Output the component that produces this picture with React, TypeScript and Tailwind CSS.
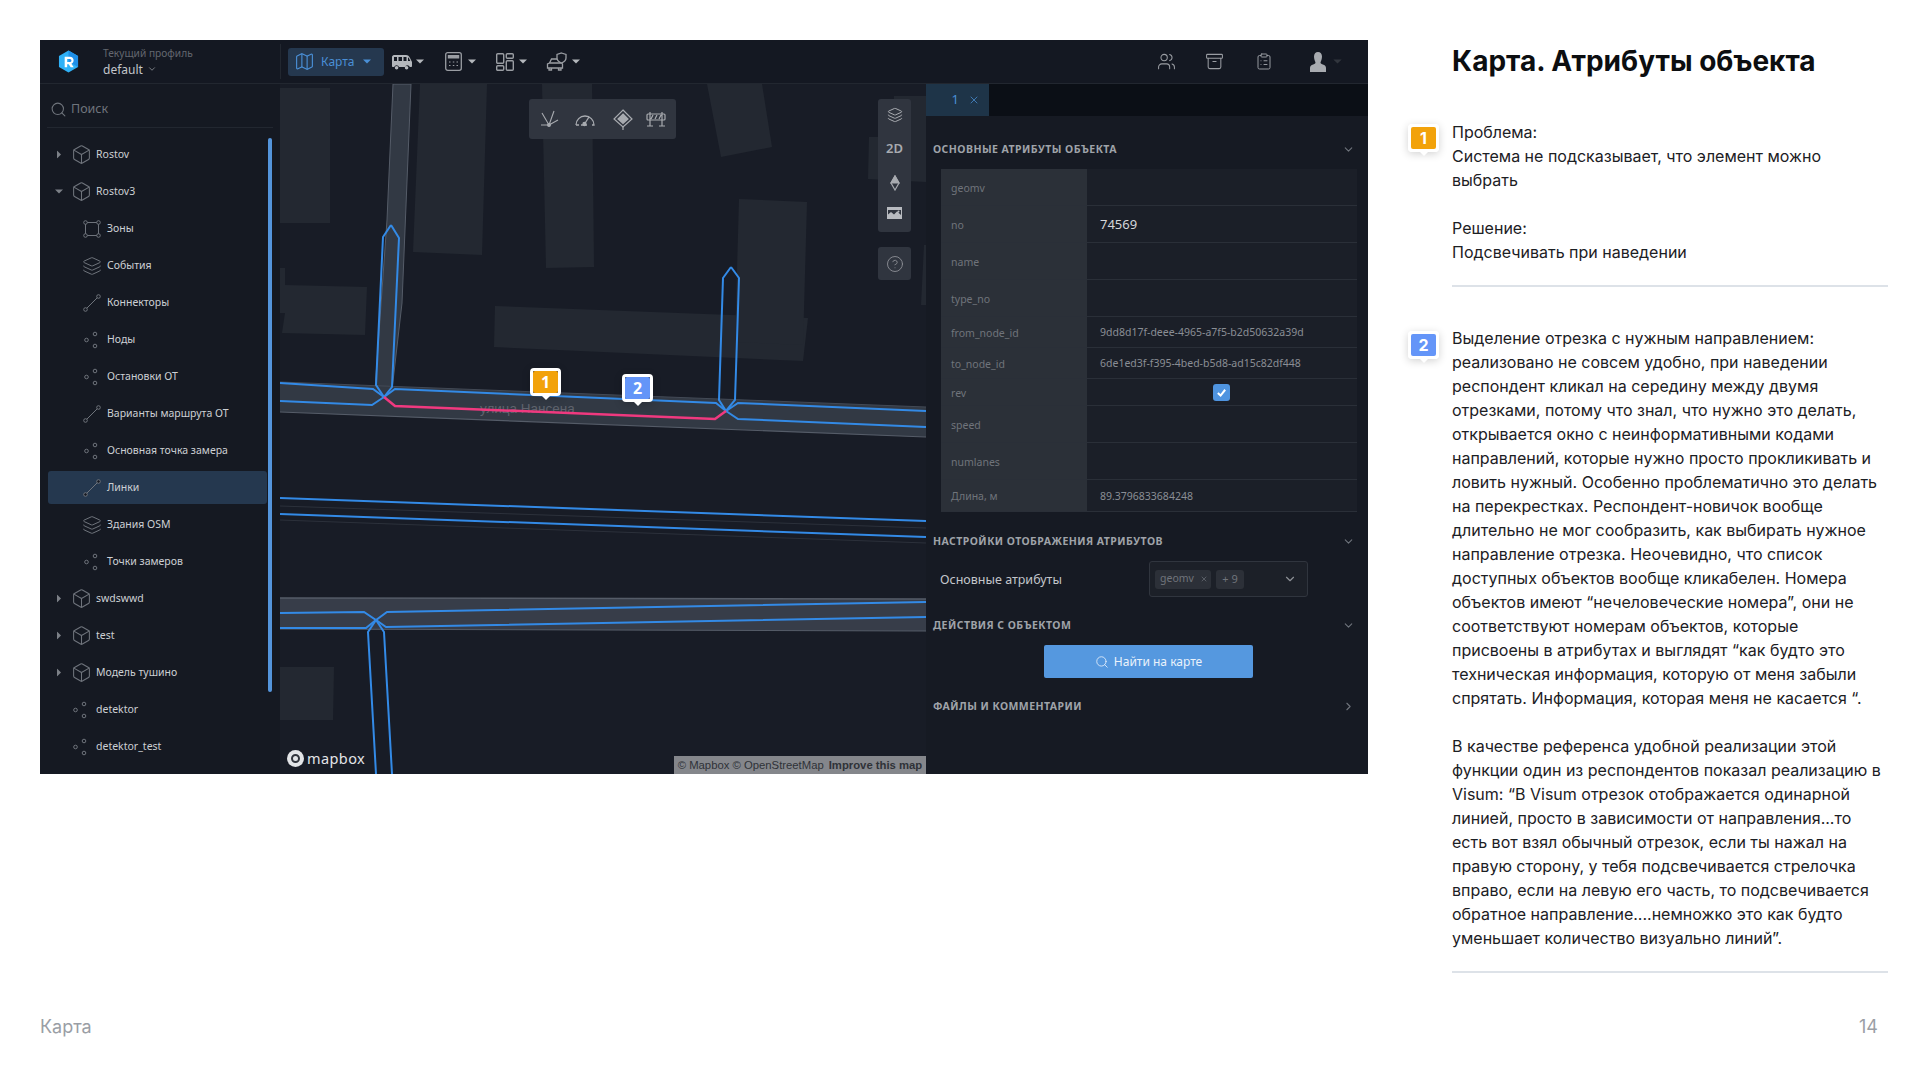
import React from 'react';
import {
  Archive,
  Box,
  ChevronDown,
  ChevronRight,
  CircleHelp,
  ClipboardList,
  Layers,
  Map as MapIcon,
  Search,
  Users,
  X,
} from 'lucide-react';

type RowKind = 'cube' | 'zone' | 'layers' | 'link' | 'nodes';

interface TreeRow {
  label: string;
  kind: RowKind;
  level: 0 | 1;
  caret?: 'right' | 'down';
  active?: boolean;
}

const treeRows: TreeRow[] = [
  { label: 'Rostov', kind: 'cube', level: 0, caret: 'right' },
  { label: 'Rostov3', kind: 'cube', level: 0, caret: 'down' },
  { label: 'Зоны', kind: 'zone', level: 1 },
  { label: 'События', kind: 'layers', level: 1 },
  { label: 'Коннекторы', kind: 'link', level: 1 },
  { label: 'Ноды', kind: 'nodes', level: 1 },
  { label: 'Остановки ОТ', kind: 'nodes', level: 1 },
  { label: 'Варианты маршрута ОТ', kind: 'link', level: 1 },
  { label: 'Основная точка замера', kind: 'nodes', level: 1 },
  { label: 'Линки', kind: 'link', level: 1, active: true },
  { label: 'Здания OSM', kind: 'layers', level: 1 },
  { label: 'Точки замеров', kind: 'nodes', level: 1 },
  { label: 'swdswwd', kind: 'cube', level: 0, caret: 'right' },
  { label: 'test', kind: 'cube', level: 0, caret: 'right' },
  { label: 'Модель тушино', kind: 'cube', level: 0, caret: 'right' },
  { label: 'detektor', kind: 'nodes', level: 0 },
  { label: 'detektor_test', kind: 'nodes', level: 0 },
];

const attrRows = [
  { name: 'geomv', value: '', h: 'h-[37px]' },
  { name: 'no', value: '74569', h: 'h-[37px]', bright: true },
  { name: 'name', value: '', h: 'h-[37px]' },
  { name: 'type_no', value: '', h: 'h-[37px]' },
  { name: 'from_node_id', value: '9dd8d17f-deee-4965-a7f5-b2d50632a39d', h: 'h-[31px]' },
  { name: 'to_node_id', value: '6de1ed3f-f395-4bed-b5d8-ad15c82df448', h: 'h-[31px]' },
  { name: 'rev', value: 'check', h: 'h-[27px]' },
  { name: 'speed', value: '', h: 'h-[37px]' },
  { name: 'numlanes', value: '', h: 'h-[37px]' },
  { name: 'Длина, м', value: '89.3796833684248', h: 'h-[32px]' },
];

const problemLines = [
  'Проблема:',
  'Система не подсказывает, что элемент можно',
  'выбрать',
  '',
  'Решение:',
  'Подсвечивать при наведении',
];

const detailLines = [
  'Выделение отрезка с нужным направлением:',
  'реализовано не совсем удобно, при наведении',
  'респондент кликал на середину между двумя',
  'отрезками, потому что знал, что нужно это делать,',
  'открывается окно с неинформативными кодами',
  'направлений, которые нужно просто прокликивать и',
  'ловить нужный. Особенно проблематично это делать',
  'на перекрестках. Респондент-новичок вообще',
  'длительно не мог сообразить, как выбирать нужное',
  'направление отрезка. Неочевидно, что список',
  'доступных объектов вообще кликабелен. Номера',
  'объектов имеют “нечеловеческие номера”, они не',
  'соответствуют номерам объектов, которые',
  'присвоены в атрибутах и выглядят “как будто это',
  'техническая информация, которую от меня забыли',
  'спрятать. Информация, которая меня не касается “.',
  '',
  'В качестве референса удобной реализации этой',
  'функции один из респондентов показал реализацию в',
  'Visum: “В Visum отрезок отображается одинарной',
  'линией, просто в зависимости от направления...то',
  'есть вот взял обычный отрезок, если ты нажал на',
  'правую сторону, у тебя подсвечивается стрелочка',
  'вправо, если на левую его часть, то подсвечивается',
  'обратное направление....немножко это как будто',
  'уменьшает количество визуально линий”.',
];

const buildings = [
  '280,88 330,88 330,223 280,223',
  '420,84 487,84 482,255 413,252',
  '280,268 285,268 285,285 367,287 365,335 282,333 285,313 280,313',
  '495,306 808,318 803,361 494,347',
  '542,84 592,84 594,267 546,268',
  '707,84 762,84 772,147 721,157',
  '739,199 807,202 803,345 735,342',
  '894,96 926,96 926,182 868,179 869,137 894,137',
  '924,245 926,245 926,305 921,305',
  '280,667 334,667 333,720 280,720',
];

const TreeIcon = ({ kind }: { kind: RowKind }) => {
  if (kind === 'cube') {
    return <Box className="h-[21px] w-[21px] shrink-0 text-[#6f747c]" strokeWidth={1.2} />;
  }
  if (kind === 'layers') {
    return <Layers className="h-[20px] w-[20px] shrink-0 text-[#6f747c]" strokeWidth={1.2} />;
  }
  if (kind === 'zone') {
    return (
      <svg viewBox="0 0 18 18" className="h-[18px] w-[18px] shrink-0 text-[#6f747c]" fill="none" stroke="currentColor">
        <rect x="2.5" y="2.5" width="13" height="13" />
        <circle cx="2.5" cy="2.5" r="1.800" fill="#151922" />
        <circle cx="15.5" cy="2.5" r="1.800" fill="#151922" />
        <circle cx="2.5" cy="15.5" r="1.800" fill="#151922" />
        <circle cx="15.5" cy="15.5" r="1.800" fill="#151922" />
      </svg>
    );
  }
  if (kind === 'link') {
    return (
      <svg viewBox="0 0 18 18" className="h-[18px] w-[18px] shrink-0 text-[#6f747c]" fill="none" stroke="currentColor">
        <line x1="3" y1="15" x2="15" y2="3" />
        <circle cx="2.5" cy="15.5" r="1.800" fill="#151922" />
        <circle cx="15.5" cy="2.5" r="1.800" fill="#151922" />
      </svg>
    );
  }
  return (
    <svg viewBox="0 0 18 18" className="h-[18px] w-[18px] shrink-0 text-[#6f747c]" fill="none" stroke="currentColor">
      <circle cx="3.5" cy="9" r="1.800" />
      <circle cx="12" cy="3" r="1.800" />
      <circle cx="12" cy="15" r="1.800" />
    </svg>
  );
};

const Caret = ({ className }: { className: string }) => (
  <svg viewBox="0 0 10 6" className={className} fill="currentColor">
    <path d="M0 0.5h10L5 5.5z" />
  </svg>
);

const Logo = () => (
  <svg viewBox="0 0 22 24" className="h-[23px] w-[21px]">
    <path d="M11 0.5 21 6.2v11.6L11 23.5 1 17.8V6.2z" fill="#2fb1f7" />
    <path d="M11 0.5 21 6.2v11.6L11 12z" fill="#1f8fe8" />
    <path d="M7 7h5.500a3.800 3.800 0 0 1 1.500 7.300L16.500 18h-3.200l-2.100-3.200H9.600V18H7zM9.600 9.300v3.200h2.900a1.600 1.600 0 0 0 0-3.200z" fill="#ffffff" />
  </svg>
);

const VanIcon = () => (
  <svg viewBox="0 0 20 16" className="h-4 w-5 text-[#b4b7bc]">
    <path
      fill="currentColor"
      d="M2 1h12c2 0 3 1 4 3l2 4v4c0 .6-.4 1-1 1h-1.200a2.500 2.500 0 0 0-4.800 0H7a2.500 2.500 0 0 0-4.800 0H1c-.6 0-1-.4-1-1V3c0-1 1-2 2-2zm0 2v4h3V3zm4.500 0v4h3.500V3zm5 0v4h3V3zm4.500.4V7h2.300l-1.300-2.800c-.2-.4-.5-.7-1-.8zM4.600 12a1.800 1.800 0 1 1 0 3.600 1.800 1.800 0 0 1 0-3.600zm10 0a1.800 1.800 0 1 1 0 3.600 1.800 1.800 0 0 1 0-3.600z"
    />
  </svg>
);

const CalcIcon = () => (
  <svg viewBox="0 0 17 19" className="h-[19px] w-[17px] text-[#9a9da3]" fill="none" stroke="currentColor" strokeWidth="1.300">
    <rect x="0.700" y="0.700" width="15.600" height="17.600" rx="2" />
    <rect x="2.800" y="3" width="11.400" height="3.500" fill="currentColor" stroke="none" />
    <path d="M4 10h1.500M7.800 10h1.500M11.500 10H13M4 13.500h1.500M7.800 13.500h1.500M11.500 13.500H13" strokeWidth="1.200" />
  </svg>
);

const TilesIcon = () => (
  <svg viewBox="0 0 18 18" className="h-[18px] w-[18px] text-[#9a9da3]" fill="none" stroke="currentColor" strokeWidth="1.400">
    <rect x="0.700" y="0.700" width="7" height="9.500" rx="1" />
    <rect x="10.300" y="0.700" width="7" height="4.500" rx="1" />
    <rect x="10.300" y="7.800" width="7" height="9.500" rx="1" />
    <rect x="0.700" y="12.800" width="7" height="4.500" rx="1" />
  </svg>
);

const CarShieldIcon = () => (
  <svg viewBox="0 0 21 19" className="h-[19px] w-[21px] text-[#9a9da3]" fill="none" stroke="currentColor" strokeWidth="1.300">
    <path d="M11 7H5.500L3.500 11 1.500 12v4h15v-4l-1-1" />
    <path d="M3.500 11h12M3 16v2h2.500v-2M12.500 16v2H15v-2" />
    <path d="M15.500 1 20 2.500v3.500c0 2.500-2 4-4.500 5-2.500-1-4.500-2.500-4.500-5V2.500z" />
  </svg>
);

const ToolFanIcon = () => (
  <svg viewBox="0 0 20 18" className="h-[18px] w-5 text-[#a8abb0]" fill="none" stroke="currentColor" strokeWidth="1.100">
    <path d="M9 15 2 3M9 15l5-14M9 15l9-5M9 15H1" />
    <circle cx="9" cy="15" r="1.400" fill="currentColor" />
  </svg>
);

const ToolGaugeIcon = () => (
  <svg viewBox="0 0 20 16" className="h-4 w-5 text-[#a8abb0]" fill="none" stroke="currentColor" strokeWidth="1.300">
    <path d="M1 14a9 9 0 0 1 18 0h-2M1 14h3M6 14h6" />
    <path d="M9.500 13 14 6" />
    <circle cx="9.500" cy="13" r="1.500" fill="currentColor" />
  </svg>
);

const ToolDiamondIcon = () => (
  <svg viewBox="0 0 20 21" className="h-[21px] w-5 text-[#a8abb0]" fill="none" stroke="currentColor" strokeWidth="1.200">
    <path d="M10 1 19 10 10 18 1 10z" />
    <path d="M10 5 15 10 10 14.500 5 10z" fill="currentColor" />
    <path d="M10 18v3" />
  </svg>
);

const ToolBarrierIcon = () => (
  <svg viewBox="0 0 20 16" className="h-4 w-5 text-[#a8abb0]" fill="none" stroke="currentColor" strokeWidth="1.200">
    <rect x="1" y="3" width="18" height="6" rx="1" />
    <path d="M5 8 7 4M9 8l2-4M13 8l2-4M4 1v14M16 1v14M1 15h6M13 15h6" />
  </svg>
);

const CompassIcon = () => (
  <svg viewBox="0 0 10 16" className="h-4 w-[10px] text-[#a8abb0]" fill="none" stroke="currentColor" strokeWidth="1.200">
    <path d="M5 1 9 8 5 15 1 8z" />
    <path d="M5 1 9 8H1z" fill="currentColor" />
  </svg>
);

const PictureIcon = () => (
  <svg viewBox="0 0 15 12" className="h-3 w-[15px] text-[#b8bbc0]" fill="currentColor">
    <path d="M0 0h15v12H0zm1 3v4.500l3-2.500 3 2.500 3-3 4 3.500V3zm10.500.500a1 1 0 1 1 0 2 1 1 0 0 1 0-2z" fillRule="evenodd" />
  </svg>
);

const Marker = ({ value, tone }: { value: string; tone: 'orange' | 'blue' }) => (
  <div className="relative h-7 w-[31px] rounded-[4px] border-[3px] border-white shadow-[0_2px_8px_rgba(0,0,0,0.18)]">
    <div
      className={`flex h-full w-full items-center justify-center rounded-[2px] text-[16px] leading-none font-bold text-white ${
        tone === 'orange' ? 'bg-[#f2a20a]' : 'bg-[#6495f8]'
      }`}
    >
      {value}
    </div>
    <div className="absolute -bottom-[7px] left-1/2 h-0 w-0 -translate-x-1/2 border-x-[5px] border-t-[5px] border-x-transparent border-t-white" />
  </div>
);

const SectionTitle = ({ title, open = true, className }: { title: string; open?: boolean; className: string }) => (
  <div className={`flex h-10 items-center justify-between pr-[13px] pl-[7px] ${className}`}>
    <span className="pt-[2px] text-[10.5px] font-bold tracking-[0.45px] text-[#9fa3a9]">{title}</span>
    {open ? (
      <ChevronDown className="h-[13px] w-[13px] text-[#6f747c]" />
    ) : (
      <ChevronRight className="h-[13px] w-[13px] text-[#6f747c]" />
    )}
  </div>
);

const Sidebar = () => (
  <aside className="relative w-[240px] shrink-0 bg-[#151922]">
    <div className="mx-[7px] flex h-11 items-center gap-[4px] border-b border-[#222730] pt-2 pl-[3px] text-[#6f747c]">
      <Search className="h-[17px] w-[17px]" strokeWidth={1.5} />
      <span className="text-[12.5px]">Поиск</span>
    </div>
    <div className="pt-2">
      {treeRows.map((row) => (
        <div
          key={row.label}
          className={`flex h-[37px] items-center ${row.level === 1 ? 'pl-[43px]' : row.caret ? 'pl-[15px]' : 'pl-[32px]'}`}
        >
          {row.active && <div className="absolute left-[8px] h-[33px] w-[219px] rounded-[3px] bg-[#25384f]" />}
          {row.caret && (
            <span className="flex w-[17px] items-center text-[#7c8087]">
              <Caret className={row.caret === 'right' ? 'h-[5px] w-2 -rotate-90' : 'h-[5px] w-2'} />
            </span>
          )}
          <span className="relative flex items-center gap-[5px]">
            <span className="flex w-[18px] justify-center">
              <TreeIcon kind={row.kind} />
            </span>
            <span className="pl-[1px] text-[10.5px] whitespace-nowrap text-[#cdd0d4]">{row.label}</span>
          </span>
        </div>
      ))}
    </div>
    <div className="absolute top-[54px] left-[228px] h-[554px] w-1 rounded-full bg-[#5495dc]" />
  </aside>
);

const RoadMap = () => (
  <div className="relative w-[646px] shrink-0 overflow-hidden bg-[#181c26]">
    <svg viewBox="280 84 646 690" className="block h-[690px] w-[646px]" fill="none">
      {buildings.map((points) => (
        <polygon key={points} points={points} fill="#232831" />
      ))}
      <polygon points="393,84 411,84 402,303 392,390 375,390 387,220" fill="#323944" stroke="#555c68" />
      <polygon points="280,382 926,407 926,437 280,412" fill="#323944" />
      <polyline points="280,412 926,437" stroke="#555c68" strokeWidth="1.200" />
      <polyline points="280,382 926,407" stroke="#434a56" />
      <polygon points="280,598 926,599 926,631 280,629" fill="#373d49" />
      <polyline points="280,598 926,599" stroke="#555c68" strokeWidth="1.500" />
      <polyline points="280,629 926,631" stroke="#555c68" />
      <polyline points="280,506 926,528" stroke="#2c313b" />
      <polyline points="280,520 926,543" stroke="#2c313b" />
      <text x="480" y="413" fill="#5f636d" fontSize="13.500" fontFamily="Liberation Sans, sans-serif">улица Нансена</text>
      <g stroke="#338ae6" strokeWidth="2">
        <polyline points="391,225 383,237 376,385 384,397 392,387 399,238 391,225" />
        <polyline points="731,267 723,278 719,400 726,411 735,400 739,278 731,267" />
        <polyline points="280,383 373,389 384,397 395,389 716,403 726,411 738,403 926,411" />
        <polyline points="280,401 372,405 384,397" />
        <polyline points="726,411 738,419 926,427" />
        <polyline points="280,498 926,521" />
        <polyline points="280,514 926,537" />
        <polyline points="280,613 364,612 376,620 387,612 926,602" />
        <polyline points="280,628 366,628 376,620 386,627 926,617" />
        <polyline points="376,620 368,632 376,774" />
        <polyline points="376,620 384,632 392,774" />
      </g>
      <polyline points="384,397 395,406 715,419 726,411" stroke="#f0397f" strokeWidth="2.500" />
    </svg>

    {/* map toolbars */}
    <div className="absolute top-[15px] left-[249px] flex h-10 w-[147px] items-center justify-between rounded-[3px] bg-[#30353f] pr-[10px] pl-[11px]">
      <ToolFanIcon />
      <span className="pl-[2px]">
        <ToolGaugeIcon />
      </span>
      <span className="pl-[4px]">
        <ToolDiamondIcon />
      </span>
      <ToolBarrierIcon />
    </div>
    <div className="absolute top-[15px] left-[598px] flex h-[133px] w-[33px] flex-col items-center justify-around rounded-[3px] bg-[#30353f] pb-[5px]">
      <Layers className="h-[16px] w-[16px] text-[#a8abb0]" strokeWidth={1.5} />
      <span className="text-[13px] font-semibold text-[#a8abb0]">2D</span>
      <CompassIcon />
      <PictureIcon />
    </div>
    <div className="absolute top-[163px] left-[598px] flex h-[33px] w-[33px] items-center justify-center rounded-[3px] bg-[#30353f]">
      <CircleHelp className="h-[18px] w-[18px] text-[#8d9096]" strokeWidth={1.2} />
    </div>

    {/* callouts on the map */}
    <div className="absolute top-[284px] left-[250px]">
      <Marker value="1" tone="orange" />
    </div>
    <div className="absolute top-[290px] left-[342px]">
      <Marker value="2" tone="blue" />
    </div>

    <div className="absolute top-[666px] left-[7px] flex items-center gap-[3px] text-[#e3e5e8]">
      <span className="flex h-[17px] w-[17px] items-center justify-center rounded-full bg-[#e3e5e8]">
        <span className="h-[9px] w-[9px] rounded-full border-[2px] border-[#31353d] bg-[#e3e5e8]" />
      </span>
      <span className="font-['Noto_Sans'] text-[14.5px] leading-none tracking-[0.4px]">mapbox</span>
    </div>
    <div className="absolute right-0 bottom-0 flex h-[18px] w-[252px] items-center justify-center gap-[5px] bg-[#84868b] font-['Liberation_Sans'] text-[11.3px] whitespace-nowrap text-[#2f3238]">
      <span>© Mapbox © OpenStreetMap</span>
      <span className="font-bold">Improve this map</span>
    </div>
  </div>
);

const AttributesPanel = () => (
  <section className="w-[442px] shrink-0 bg-[#161a23]">
    <div className="flex h-8 bg-[#0b0f16]">
      <div className="flex w-[63px] items-center justify-end gap-[9px] bg-[#1e3448] pr-[9px] text-[#4a8fd6]">
        <span className="text-[13px]">1</span>
        <X className="h-3 w-3" strokeWidth={1.5} />
      </div>
    </div>
    <SectionTitle title="ОСНОВНЫЕ АТРИБУТЫ ОБЪЕКТА" className="mt-[13px]" />
    <div className="ml-[15px] w-[416px]">
      {attrRows.map((row) => (
        <div key={row.name} className={`flex border-b border-[#2a2f38] ${row.h}`}>
          <div className="flex w-[146px] items-center bg-[#2b3038] pt-[3px] pl-[10px] text-[10.5px] text-[#70747b]">{row.name}</div>
          <div className="flex flex-1 items-center bg-[#1b1f28] pl-[13px]">
            {row.value === 'check' ? (
              <span className="ml-[113px] flex h-[17px] w-[17px] items-center justify-center rounded-[3px] bg-[#4f94e0]">
                <svg viewBox="0 0 12 12" className="h-[11px] w-[11px]" fill="none" stroke="#ffffff" strokeWidth="2.200">
                  <path d="M2 6.500 5 9.300 10 3" />
                </svg>
              </span>
            ) : row.bright ? (
              <span className="pt-[2px] text-[13px] text-[#d4d6da]">{row.value}</span>
            ) : (
              <span className="pt-[2px] text-[10.5px] text-[#8a8e95]">{row.value}</span>
            )}
          </div>
        </div>
      ))}
    </div>
    <SectionTitle title="НАСТРОЙКИ ОТОБРАЖЕНИЯ АТРИБУТОВ" className="mt-[9px]" />
    <div className="flex h-9 items-center pl-[14px]">
      <span className="w-[209px] pt-[2px] text-[12.5px] text-[#c3c6cb]">Основные атрибуты</span>
      <div className="flex h-9 w-[159px] items-center rounded-[3px] border border-[#30353e] bg-[#1c2028] pr-[10px] pl-[5px]">
        <span className="flex h-[19px] w-[56px] items-center gap-[6px] rounded-[3px] bg-[#2c3038] pl-[5px] text-[10.5px] text-[#70747b]">
          geomv
          <X className="h-2 w-2" />
        </span>
        <span className="ml-[5px] flex h-[19px] w-[28px] items-center justify-center rounded-[3px] bg-[#2c3038] text-[11px] text-[#70747b]">
          + 9
        </span>
        <ChevronDown className="ml-auto h-[14px] w-[14px] text-[#8d9096]" />
      </div>
    </div>
    <SectionTitle title="ДЕЙСТВИЯ С ОБЪЕКТОМ" className="mt-2" />
    <div className="ml-[118px] flex h-[33px] w-[209px] items-center justify-center gap-[5px] rounded-[2px] bg-[#5598df] text-[12px] text-[#eaf2fb]">
      <Search className="h-[14px] w-[14px]" strokeWidth={1.4} />
      Найти на карте
    </div>
    <SectionTitle title="ФАЙЛЫ И КОММЕНТАРИИ" open={false} className="mt-2" />
  </section>
);

const TopBar = () => (
  <header className="flex h-11 items-center border-b border-[#222730] bg-[#141822]">
    <div className="flex w-[240px] shrink-0 items-center pl-[18px]">
      <Logo />
      <div className="ml-[24px] flex flex-col pt-[1px]">
        <span className="text-[10.2px] leading-[13px] text-[#63676f]">Текущий профиль</span>
        <span className="flex items-center gap-[4px] pt-[1px] text-[12px] leading-[17px] text-[#c3c6cb]">
          default
          <ChevronDown className="h-[10px] w-[10px] text-[#8d9096]" />
        </span>
      </div>
    </div>
    <div className="h-[35px] w-px bg-[#222730]" />
    <div className="ml-[7px] flex h-[28px] w-[96px] items-center gap-[6px] rounded-[3px] bg-[#25384f] pl-[6px] text-[#4a8fd6]">
      <MapIcon className="h-[21px] w-[21px]" strokeWidth={1.3} />
      <span className="text-[12px]">Карта</span>
      <Caret className="ml-[3px] h-[5px] w-2" />
    </div>
    <div className="ml-2 flex items-center gap-[4px] text-[#b4b7bc]">
      <VanIcon />
      <Caret className="h-[5px] w-2" />
    </div>
    <div className="ml-[21px] flex items-center gap-[6px] text-[#b4b7bc]">
      <CalcIcon />
      <Caret className="h-[5px] w-2" />
    </div>
    <div className="ml-[20px] flex items-center gap-[5px] text-[#b4b7bc]">
      <TilesIcon />
      <Caret className="h-[5px] w-2" />
    </div>
    <div className="ml-[19px] flex items-center gap-[5px] text-[#b4b7bc]">
      <CarShieldIcon />
      <Caret className="h-[5px] w-2" />
    </div>
    <div className="ml-auto flex items-center pr-[26px] text-[#9a9da3]">
      <Users className="h-[19px] w-[19px]" strokeWidth={1.3} />
      <Archive className="ml-[29px] h-[19px] w-[19px]" strokeWidth={1.3} />
      <ClipboardList className="ml-[31px] h-[19px] w-[18px]" strokeWidth={1.3} />
      <svg viewBox="0 0 16 20" className="ml-[37px] h-5 w-4 text-[#a8abb0]" fill="currentColor">
        <path d="M8 0c2.500 0 4 2 4 4.500S11 9 10.500 10.500c0 1 1 1.500 3 2.300 1.700.7 2.500 1.700 2.500 3.200V20H0v-4c0-1.500.8-2.500 2.500-3.200 2-.8 3-1.300 3-2.300C5 9 4 7 4 4.500S5.500 0 8 0z" />
      </svg>
      <Caret className="ml-[7px] h-[5px] w-[9px] text-[#31353d]" />
    </div>
  </header>
);

const TextLines = ({ lines }: { lines: string[] }) => (
  <div className="text-[16px] leading-6 text-[#1c2024]">
    {lines.map((line, index) => (
      <div key={index} className="h-6 whitespace-nowrap">
        {line}
      </div>
    ))}
  </div>
);

export default function App() {
  return (
    <div className="flex h-[1080px] w-[1920px] overflow-hidden bg-white font-['Inter',sans-serif]">
      <main className="w-[1404px] shrink-0 pt-10 pl-10">
        <div className="flex h-[734px] w-[1328px] flex-col font-['Noto_Sans',sans-serif]">
          <TopBar />
          <div className="flex h-[690px]">
            <Sidebar />
            <RoadMap />
            <AttributesPanel />
          </div>
        </div>
        <div className="mt-[241px] text-[18px] leading-6 text-[#9a9ea5]">Карта</div>
      </main>

      <aside className="flex-1 pt-[43px]">
        <h1 className="pl-12 text-[28px] leading-9 font-bold text-[#0c0e10]">Карта. Атрибуты объекта</h1>
        <div className="mt-[41px] flex">
          <div className="w-12 pt-1 pl-[4px]">
            <Marker value="1" tone="orange" />
          </div>
          <TextLines lines={problemLines} />
        </div>
        <div className="mt-[21px] ml-12 h-[2px] w-[436px] bg-[#dde2e8]" />
        <div className="mt-[39px] flex">
          <div className="w-12 pt-[5px] pl-[4px]">
            <Marker value="2" tone="blue" />
          </div>
          <TextLines lines={detailLines} />
        </div>
        <div className="mt-[21px] ml-12 h-[2px] w-[436px] bg-[#dde2e8]" />
        <div className="mt-[42px] w-[474px] text-right text-[18px] leading-6 text-[#9a9ea5]">14</div>
      </aside>
    </div>
  );
}
